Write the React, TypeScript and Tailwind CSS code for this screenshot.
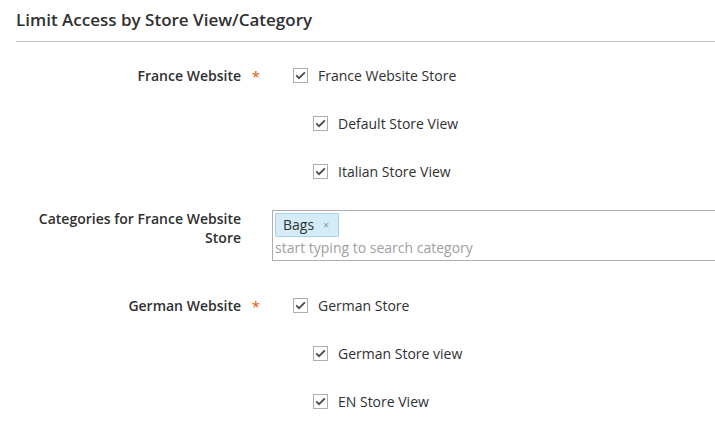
import React from 'react';

const font = { fontFamily: '"Open Sans", "Liberation Sans", sans-serif' };

function Check({ label, indent }: { label: string; indent?: boolean }) {
  return (
    <div className={['flex h-[20px] items-center', indent ? 'pl-[41px]' : 'pl-[21px]'].join(' ')}>
      <span className="flex h-[15px] w-[15px] items-center justify-center border border-[#adadad] bg-white">
        <svg width="11" height="9" viewBox="0 0 11 9" fill="none">
          <path d="M1.2 4.4 L4 7.2 L9.9 1.3" stroke="#514943" strokeWidth="1.8" />
        </svg>
      </span>
      <span className="ml-[10px] text-[14px] text-[#303030]">{label}</span>
    </div>
  );
}

function Label({ children, required }: { children: React.ReactNode; required?: boolean }) {
  return (
    <div className="relative w-[272px] shrink-0 pr-[31px] text-right text-[14px] font-semibold leading-[19px] text-[#303030]">
      {children}
      {required && (
        <span className="absolute right-[12px] top-[1px] text-[15px] font-normal text-[#eb5202]">*</span>
      )}
    </div>
  );
}

export default function App() {
  return (
    <div className="h-[427px] w-[715px] overflow-hidden bg-white" style={font}>
      <div className="pl-4">
        <h2 className="border-b border-[#c8c4bf] pt-[7px] pb-[9px] text-[17px] font-semibold leading-[25px] text-[#303030]">
          Limit Access by Store View/Category
        </h2>
      </div>

      {/* France */}
      <div className="mt-[23px] flex">
        <div className="pt-[1px]">
          <Label required>France Website</Label>
        </div>
        <div className="flex flex-col gap-[28px]">
          <Check label="France Website Store" />
          <Check label="Default Store View" indent />
          <Check label="Italian Store View" indent />
        </div>
      </div>

      {/* Categories */}
      <div className="mt-[29px] flex">
        <div className="-mt-[1px]">
          <Label>
            Categories for France Website
            <br />
            Store
          </Label>
        </div>
        <div className="h-[51px] flex-1 border border-r-0 border-[#adadad] px-[2px] pt-[1px]">
          <span className="inline-flex h-[24px] items-center rounded-[1px] border border-[#a5d3e8] bg-[#d4ecf7] pl-[7px] pr-[9px] text-[14px] text-[#303030]">
            Bags
            <span className="ml-[9px] text-[11px] leading-none text-[#9a9a9a]">×</span>
          </span>
          <div className="mt-[1px] text-[14px] leading-[20px] text-[#a0a0a0]">start typing to search category</div>
        </div>
      </div>

      {/* German */}
      <div className="mt-[34px] flex">
        <div className="pt-[1px]">
          <Label required>German Website</Label>
        </div>
        <div className="flex flex-col gap-[28px]">
          <Check label="German Store" />
          <Check label="German Store view" indent />
          <Check label="EN Store View" indent />
        </div>
      </div>
    </div>
  );
}
